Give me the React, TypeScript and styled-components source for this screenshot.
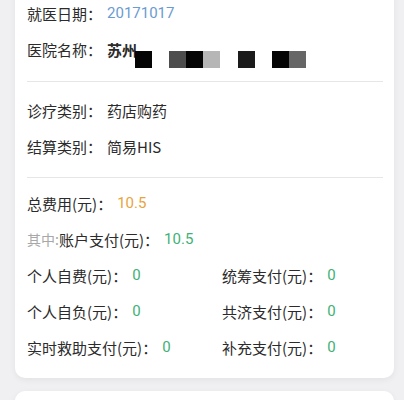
import styled, { createGlobalStyle } from 'styled-components';

const GlobalStyle = createGlobalStyle`
  html, body {
    margin: 0;
    padding: 0;
    background: #f0f0f2;
  }
  body {
    font-family: "Noto Sans CJK SC", "Noto Sans", sans-serif;
    color: #2b2b2b;
  }
`;

const Page = styled.div`
  width: 404px;
  height: 400px;
  overflow: hidden;
  padding: 0 10px 0 15px;
  box-sizing: border-box;
  display: flex;
  flex-direction: column;
  gap: 13px;
`;

const Card = styled.div`
  margin-top: -20px;
  background: #fff;
  border-radius: 10px;
  box-shadow: 0 2px 6px rgba(0, 0, 0, 0.06);
  padding: 15px 11px 13px 12px;
  flex-shrink: 0;
`;

const NextCard = styled.div`
  background: #fff;
  border-radius: 10px;
  height: 40px;
  flex-shrink: 0;
  box-shadow: 0 2px 6px rgba(0, 0, 0, 0.06);
`;

const Section = styled.div<{ $top: number; $bottom: number; $last?: boolean }>`
  display: grid;
  grid-template-columns: 195px 1fr;
  padding-top: ${(p) => p.$top}px;
  padding-bottom: ${(p) => p.$bottom}px;
  border-bottom: ${(p) => (p.$last ? 'none' : '1px solid #e6e6e6')};
`;

const Row = styled.div<{ $full?: boolean }>`
  grid-column: ${(p) => (p.$full ? '1 / 3' : 'auto')};
  height: 36px;
  display: flex;
  align-items: center;
  font-size: 15px;
  white-space: nowrap;
`;

const Label = styled.span`
  color: #2b2b2b;
`;

const Hint = styled.span`
  color: #a8a8a8;
  font-size: 14px;
`;

const Value = styled.span<{ $color?: string; $bold?: boolean }>`
  margin-left: 5px;
  color: ${(p) => p.$color || '#2b2b2b'};
  font-weight: ${(p) => (p.$bold ? 700 : 400)};
  font-family: ${(p) => (p.$color ? '"Roboto", "Noto Sans", sans-serif' : 'inherit')};
`;

const Masks = styled.span`
  position: relative;
  top: 10px;
  display: flex;
  margin-left: -2px;
`;

const Block = styled.span<{ $shade: string; $gap?: number }>`
  width: 17px;
  height: 17px;
  background: ${(p) => p.$shade};
  margin-left: ${(p) => p.$gap || 0}px;
`;

const BLUE = '#6b9bd0';
const ORANGE = '#e8a43c';
const GREEN = '#41b176';

const masks = [
  { shade: '#050505', gap: 0 },
  { shade: '#4d4d4d', gap: 17 },
  { shade: '#050505', gap: 0 },
  { shade: '#b6b6b6', gap: 0 },
  { shade: '#1b1b1b', gap: 18 },
  { shade: '#050505', gap: 17 },
  { shade: '#666', gap: 0 },
];

const pairs = [
  ['个人自费(元)：', '统筹支付(元)：'],
  ['个人自负(元)：', '共济支付(元)：'],
  ['实时救助支付(元)：', '补充支付(元)：'],
];

export default function App() {
  return (
    <>
      <GlobalStyle />
      <Page>
        <Card>
          <Section $top={0} $bottom={14}>
            <Row $full>
              <Label>就医日期：</Label>
              <Value $color={BLUE}>20171017</Value>
            </Row>
            <Row $full>
              <Label>医院名称：</Label>
              <Value $bold>苏州</Value>
              <Masks>
                {masks.map((m, i) => (
                  <Block key={i} $shade={m.shade} $gap={m.gap} />
                ))}
              </Masks>
            </Row>
          </Section>
          <Section $top={10} $bottom={13}>
            <Row $full>
              <Label>诊疗类别：</Label>
              <Value>药店购药</Value>
            </Row>
            <Row $full>
              <Label>结算类别：</Label>
              <Value>简易HIS</Value>
            </Row>
          </Section>
          <Section $top={7} $bottom={0} $last>
            <Row $full>
              <Label>总费用(元)：</Label>
              <Value $color={ORANGE}>10.5</Value>
            </Row>
            <Row $full>
              <Hint>其中:</Hint>
              <Label>账户支付(元)：</Label>
              <Value $color={GREEN}>10.5</Value>
            </Row>
            {pairs.flatMap(([a, b]) => [
              <Row key={a}>
                <Label>{a}</Label>
                <Value $color={GREEN}>0</Value>
              </Row>,
              <Row key={b}>
                <Label>{b}</Label>
                <Value $color={GREEN}>0</Value>
              </Row>,
            ])}
          </Section>
        </Card>
        <NextCard />
      </Page>
    </>
  );
}
